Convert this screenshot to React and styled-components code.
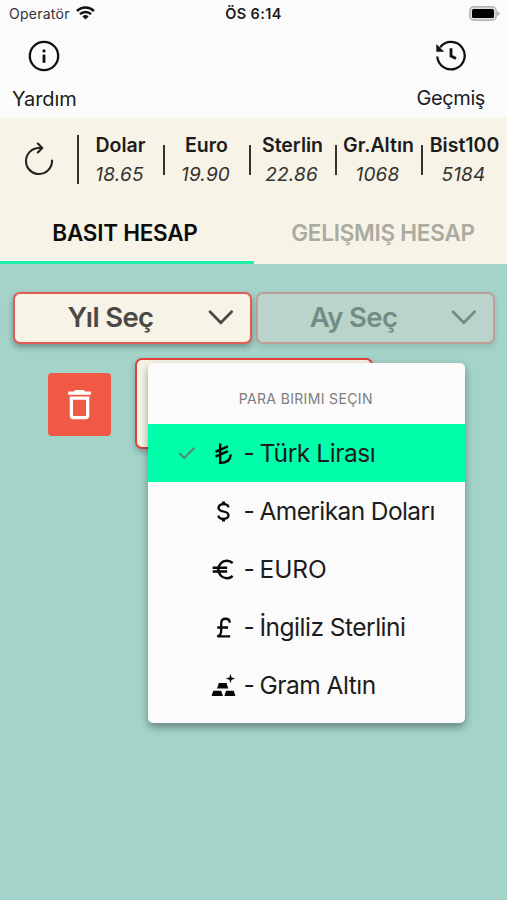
import React, { useState } from "react"
import styled, { createGlobalStyle } from "styled-components"
import { MdDeleteOutline } from "react-icons/md"

const GlobalStyle = createGlobalStyle`
  * {
    box-sizing: border-box;
  }

  body {
    margin: 0;
    background: #a4d3ca;
    font-family: Inter, "Liberation Sans", sans-serif;
    color: #1c1c1c;
  }

  button {
    border: none;
    padding: 0;
    background: none;
    font-family: inherit;
    color: inherit;
  }

  svg {
    display: block;
    flex: none;
  }
`

const Screen = styled.div`
  height: 900px;
  overflow: hidden;
  white-space: nowrap;
`

const StatusBar = styled.div`
  height: 28px;
  padding: 0 7px 0 9px;
  display: grid;
  grid-template-columns: 1fr auto 1fr;
  align-items: center;
  background: #fbfbfb;
  font-size: 14px;
  line-height: 28px;
`

const Carrier = styled.div`
  display: flex;
  align-items: center;
  gap: 6px;
  letter-spacing: 0.25px;
  color: #333;

  svg {
    margin-top: -2px;
  }
`

const Clock = styled.div`
  padding-right: 2px;
  font-size: 14.5px;
  font-weight: 600;
  letter-spacing: 0.4px;
`

const Battery = styled.div`
  display: flex;
  justify-content: flex-end;
  padding-bottom: 2px;
`

const TopBar = styled.header`
  height: 90px;
  padding: 12px 22px 0 12px;
  display: flex;
  justify-content: space-between;
  background: #fbfbfb;
`

const TopButton = styled.button`
  display: flex;
  flex-direction: column;
  align-items: center;
  gap: ${props => props.$gap};
  font-size: 20px;
  line-height: 24px;
  letter-spacing: ${props => props.$spacing};
`

const Panel = styled.section`
  height: 146px;
  background: #f7f3e7;
`

const Ticker = styled.div`
  height: 83px;
  display: flex;
  align-items: center;
`

const Refresh = styled.button`
  width: 77px;
  padding-bottom: 2px;
  display: flex;
  justify-content: center;
`

const Divider = styled.div`
  width: 2px;
  height: ${props => (props.$tall ? "49px" : "30px")};
  background: #33322e;
`

const Rate = styled.div`
  flex: 1 1 0;
  min-width: 0;
  display: flex;
  flex-direction: column;
  align-items: center;
  line-height: 29px;
`

const RateName = styled.span`
  margin: 0 -2px 0 -3px;
  font-size: 19.5px;
  font-weight: 600;
`

const RateValue = styled.span`
  margin-right: 3px;
  padding-top: 1px;
  line-height: 28px;
  font-size: 19px;
  font-style: italic;
  letter-spacing: 0.2px;
  color: #33322e;
`

const Tabs = styled.nav`
  height: 63px;
  display: grid;
  grid-template-columns: 254px 1fr;
`

const Tab = styled.button`
  height: 63px;
  padding: ${props => props.$padding};
  border-bottom: 3px solid ${props => (props.$active ? "#1eefad" : "transparent")};
  font-size: 22.5px;
  font-weight: 600;
  letter-spacing: -0.25px;
  color: ${props => (props.$active ? "#0c0c0b" : "#abaaa1")};
`

const Content = styled.main`
  padding: 28px 12px 0 13px;
`

const Selects = styled.div`
  display: grid;
  grid-template-columns: 239px 239px;
  gap: 4px;
`

const Select = styled.button`
  height: 52px;
  padding: 0 17px 2px 0;
  display: flex;
  align-items: center;
  border: 2px solid ${props => (props.$off ? "#c09d98" : "#e35b53")};
  border-radius: 7px;
  background: ${props => (props.$off ? "#bad4cc" : "#f7f3e7")};
  box-shadow: 0 3px 6px rgba(0, 0, 0, ${props => (props.$off ? 0.12 : 0.32)});
  font-size: 27.5px;
  font-weight: 600;
  letter-spacing: -0.65px;
  color: ${props => (props.$off ? "#6f8c85" : "#4a4945")};
`

const SelectLabel = styled.span`
  flex: 1;
  padding-right: 2px;
  text-align: center;
`

const Entry = styled.div`
  display: flex;
  margin-top: 14px;
  padding-left: 35px;
`

const DeleteButton = styled.button`
  width: 63px;
  height: 63px;
  margin: 15px 24px 0 0;
  display: flex;
  align-items: center;
  justify-content: center;
  border-radius: 4px;
  background: #f05a45;
  color: #fff;
`

const AmountBox = styled.div`
  position: relative;
  width: 238px;
  height: 91px;
  border: 2px solid #e0403c;
  border-radius: 7px;
  background: #f7f3e7;
  box-shadow: 0 3px 6px rgba(0, 0, 0, 0.25);
`

// opens on top of the amount box
const Menu = styled.div`
  position: absolute;
  top: 3px;
  left: 10.5px;
  width: 317.5px;
  height: 360px;
  border-radius: 5px;
  background: #fbfbfb;
  box-shadow: 0 4px 9px rgba(0, 0, 0, 0.38);
`

const MenuTitle = styled.div`
  height: 61px;
  padding: 11px 1px 0 0;
  line-height: 50px;
  text-align: center;
  font-size: 14px;
  letter-spacing: 0.35px;
  color: #7d7d7d;
`

const Option = styled.button`
  width: 100%;
  height: 58px;
  padding: 0 0 0 30px;
  display: grid;
  grid-template-columns: 20px 52px 1fr;
  align-items: center;
  text-align: left;
  background: ${props => (props.$active ? "#00ffab" : "transparent")};
  font-size: 24.5px;
  letter-spacing: ${props => props.$spacing};
`

const Symbol = styled.span`
  display: flex;
  justify-content: center;
`

const OptionLabel = styled.span`
  display: flex;
  margin-left: -6px;
`

const Dash = styled.span`
  width: 16px;
`

const Stroke = ({ size = 25, width = 2, children }) => (
  <svg
    width={size}
    height={size}
    viewBox="0 0 24 24"
    fill="none"
    stroke="#080808"
    strokeWidth={width}
  >
    {children}
  </svg>
)

const WifiIcon = () => (
  <svg width="19" height="14" viewBox="0 0 19 14" fill="none" stroke="#111" strokeWidth="2.5">
    <path d="M1 5C5.7 .4 13.3 .4 18 5M4 8.2C7 5.2 12 5.2 15 8.2" />
    <path d="M9.5 13.5L6.4 10.4Q9.5 7.7 12.6 10.4Z" fill="#111" stroke="none" />
  </svg>
)

const BatteryIcon = () => (
  <svg width="31" height="15" viewBox="0 0 31 15">
    <rect x=".8" y=".8" width="26.4" height="13.4" rx="4" fill="#ddd" stroke="#b4b4b4" strokeWidth="1.4" />
    <rect x="3" y="3" width="22" height="9" rx="1.5" fill="#000" />
    <path d="M28.3 5Q30.5 6 30.5 7.5T28.3 10Z" fill="#aaa" />
  </svg>
)

const InfoIcon = () => (
  <svg width="32" height="32" viewBox="0 0 32 32" fill="#111">
    <circle cx="16" cy="16" r="14.2" fill="none" stroke="#111" strokeWidth="2.3" />
    <circle cx="16" cy="10.9" r="1.6" />
    <rect x="14.6" y="14.6" width="2.8" height="8.2" />
  </svg>
)

const HistoryIcon = () => (
  <svg width="32" height="32" viewBox="0 0 32 32" fill="none" stroke="#111" strokeWidth="2.3">
    <path d="M2.3 16.5A13.7 13.7 0 1 0 5.2 7.2" />
    <path d="M1.3 4V11.8H9.2Z" fill="#111" stroke="none" />
    <path d="M16 8.2V16L21 18.4" strokeWidth="2.8" />
  </svg>
)

const RefreshIcon = () => (
  <svg width="30" height="34" viewBox="0 0 30 34" fill="none" stroke="#222" strokeWidth="2.1">
    <path d="M28 18.5A13 13 0 1 1 15 6H17.5" strokeLinecap="round" />
    <path d="M13.8 1.5L18.3 6L13.8 10.5" strokeLinecap="round" strokeLinejoin="round" />
  </svg>
)

const Chevron = () => (
  <svg width="25" height="16" viewBox="0 0 25 16" fill="none" stroke="currentColor" strokeWidth="2.7">
    <path d="M2 2.8L12.8 13.8L23.6 2.8" strokeLinecap="round" />
  </svg>
)

const CheckIcon = () => (
  <svg width="18" height="14" viewBox="0 0 18 14" fill="none" stroke="#5b8577" strokeWidth="2">
    <path d="M1.2 7L6.2 12L16.5 1.7" />
  </svg>
)

const LiraIcon = () => (
  <Stroke width={2.3}>
    <path d="M8.8 2.4V21Q18.4 21 19 12.8M4.4 10.4L16.2 5.1M4.4 15L16.2 9.7" />
  </Stroke>
)

const DollarIcon = () => (
  <Stroke width={2.2}>
    <path d="M16.8 8Q16.3 5 12 5T7.2 8.4Q7.2 11 12 12T16.8 15.7Q16.8 19 12 19T7.2 15.8" />
    <path d="M12 2.4V5.5M12 18.5V21.6" strokeWidth="3" />
  </Stroke>
)

const EuroIcon = () => (
  <Stroke width={2.4}>
    <path d="M20.8 5.8A8.3 8.3 0 1 0 20.8 18.2M1.6 10.2H15.5M1.6 14H15.5" />
  </Stroke>
)

const PoundIcon = () => (
  <Stroke width={2.2}>
    <path d="M18 7.5Q18 3.6 14 3.6Q9.8 3.6 9.8 8V15Q9.8 19 6 20.6H18.4M6 12H16.4" />
  </Stroke>
)

const GoldIcon = () => (
  <svg width="25" height="25" viewBox="0 0 24 24" fill="#080808">
    <path d="M.5 22L2.2 17H9.8L11.5 22ZM12.8 22L14.5 17H21.8L23.5 22ZM5.8 14.8L7.5 9.7H14.9L16.6 14.8Z" />
    <path d="M18.7 .7L19.8 4.2L23.3 5.3L19.8 6.4L18.7 9.9L17.6 6.4L14.1 5.3L17.6 4.2Z" />
  </svg>
)

const rates = [
  { name: "Dolar", value: "18.65" },
  { name: "Euro", value: "19.90" },
  { name: "Sterlin", value: "22.86" },
  { name: "Gr.Altın", value: "1068" },
  { name: "Bist100", value: "5184" }
]

const currencies = [
  { id: "try", label: "Türk Lirası", spacing: "-0.45px", Icon: LiraIcon },
  { id: "usd", label: "Amerikan Doları", spacing: "-0.6px", Icon: DollarIcon },
  { id: "eur", label: "EURO", spacing: "-0.1px", Icon: EuroIcon },
  { id: "gbp", label: "İngiliz Sterlini", spacing: "-0.5px", Icon: PoundIcon },
  { id: "gold", label: "Gram Altın", spacing: "-0.5px", Icon: GoldIcon }
]

const CurrencyMenu = ({ selected, onSelect }) => (
  <Menu>
    <MenuTitle>PARA BIRIMI SEÇIN</MenuTitle>
    {currencies.map(({ id, label, spacing, Icon }) => (
      <Option
        key={id}
        $active={id === selected}
        $spacing={spacing}
        onClick={() => onSelect(id)}
      >
        <span>{id === selected && <CheckIcon />}</span>
        <Symbol>
          <Icon />
        </Symbol>
        <OptionLabel>
          <Dash>-</Dash>
          {label}
        </OptionLabel>
      </Option>
    ))}
  </Menu>
)

const App = () => {
  const [tab, setTab] = useState("simple")
  const [currency, setCurrency] = useState("try")

  return (
    <Screen>
      <GlobalStyle />
      <StatusBar>
        <Carrier>
          Operatör
          <WifiIcon />
        </Carrier>
        <Clock>ÖS 6:14</Clock>
        <Battery>
          <BatteryIcon />
        </Battery>
      </StatusBar>

      <TopBar>
        <TopButton $gap="15px" $spacing="-0.1px">
          <InfoIcon />
          Yardım
        </TopButton>
        <TopButton $gap="14px" $spacing="-0.4px">
          <HistoryIcon />
          Geçmiş
        </TopButton>
      </TopBar>

      <Panel>
        <Ticker>
          <Refresh>
            <RefreshIcon />
          </Refresh>
          {rates.map((rate, i) => (
            <React.Fragment key={rate.name}>
              <Divider $tall={i === 0} />
              <Rate>
                <RateName>{rate.name}</RateName>
                <RateValue>{rate.value}</RateValue>
              </Rate>
            </React.Fragment>
          ))}
        </Ticker>
        <Tabs>
          <Tab
            $active={tab === "simple"}
            $padding="2px 4px 0 0"
            onClick={() => setTab("simple")}
          >
            BASIT HESAP
          </Tab>
          <Tab
            $active={tab === "advanced"}
            $padding="2px 0 0 5px"
            onClick={() => setTab("advanced")}
          >
            GELIŞMIŞ HESAP
          </Tab>
        </Tabs>
      </Panel>

      <Content>
        <Selects>
          <Select>
            <SelectLabel>Yıl Seç</SelectLabel>
            <Chevron />
          </Select>
          <Select $off>
            <SelectLabel>Ay Seç</SelectLabel>
            <Chevron />
          </Select>
        </Selects>
        <Entry>
          <DeleteButton>
            <MdDeleteOutline size={39} />
          </DeleteButton>
          <AmountBox>
            <CurrencyMenu selected={currency} onSelect={setCurrency} />
          </AmountBox>
        </Entry>
      </Content>
    </Screen>
  )
}

export default App
